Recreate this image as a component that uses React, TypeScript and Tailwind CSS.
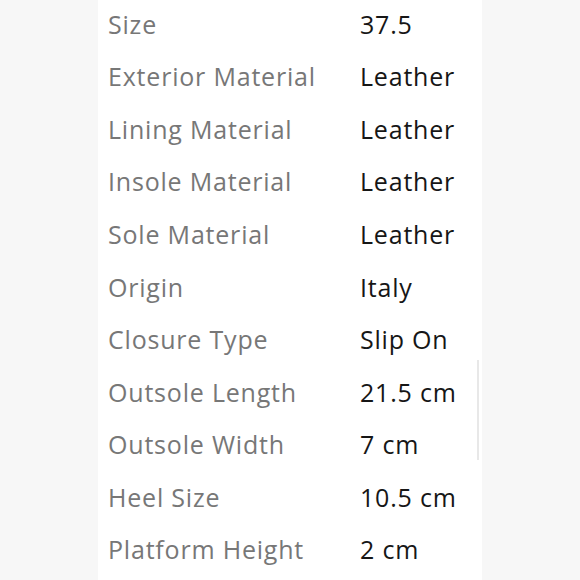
import React from 'react';

const specs: [string, string][] = [
  ['Size', '37.5'],
  ['Exterior Material', 'Leather'],
  ['Lining Material', 'Leather'],
  ['Insole Material', 'Leather'],
  ['Sole Material', 'Leather'],
  ['Origin', 'Italy'],
  ['Closure Type', 'Slip On'],
  ['Outsole Length', '21.5 cm'],
  ['Outsole Width', '7 cm'],
  ['Heel Size', '10.5 cm'],
  ['Platform Height', '2 cm'],
];

export default function App() {
  return (
    <div className="w-[580px] h-[580px] overflow-hidden bg-[#f7f7f7] flex">
      <div className="relative ml-[98px] w-[384px] h-full bg-white">
        {/* Spec rows */}
        <div className="mt-[-2px] pl-[10px]" style={{ fontFamily: '"Open Sans", sans-serif' }}>
          {specs.map(([label, value]) => (
            <div key={label} className="flex items-center h-[52.6px] text-[25px] tracking-[0.8px]">
              <span className="w-[252px] text-[#777777]">{label}</span>
              <span className="text-[#161616]">{value}</span>
            </div>
          ))}
        </div>

        {/* Scrollbar */}
        <div className="absolute right-[3px] top-[360px] h-[100px] w-[2px] bg-[#e8e8e8]" />
      </div>
    </div>
  );
}
